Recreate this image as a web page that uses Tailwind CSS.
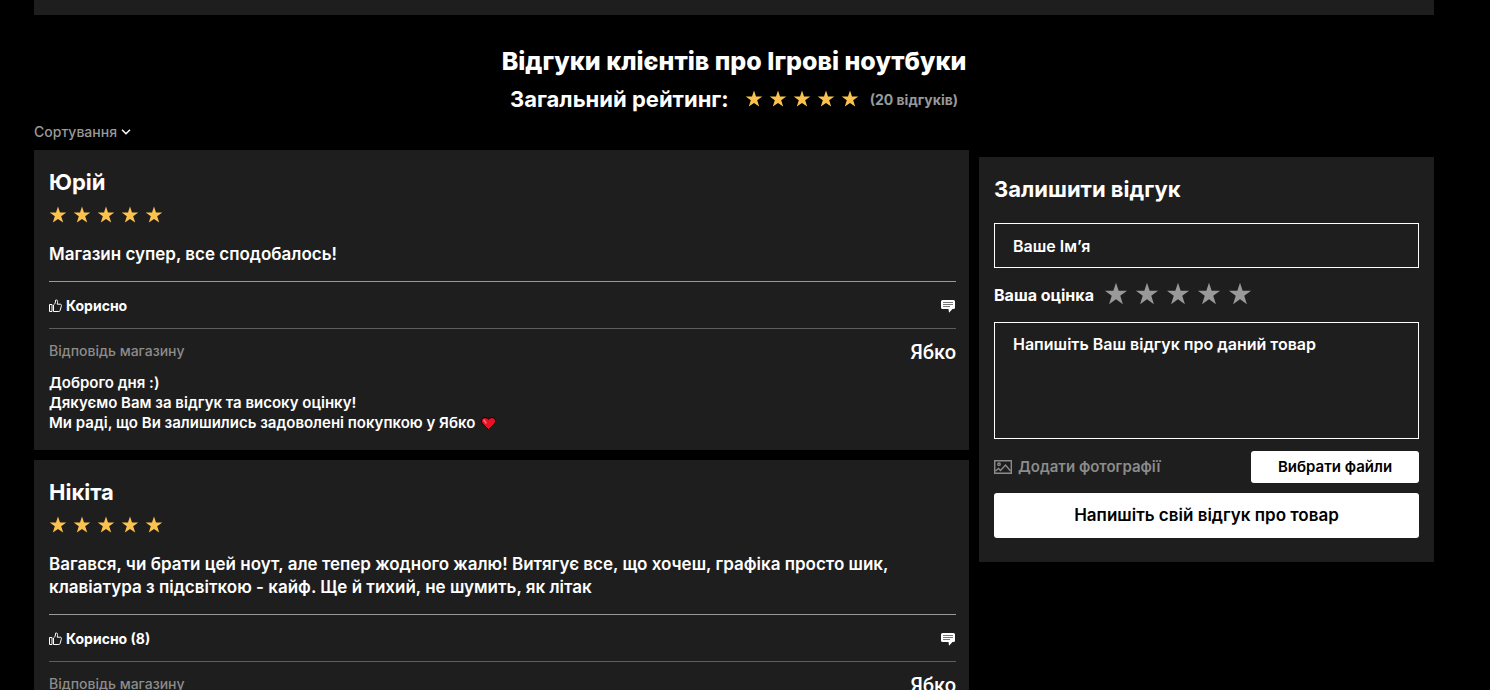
<!DOCTYPE html>
<html lang="uk">
<head>
  <meta charset="UTF-8">
  <title>Відгуки клієнтів про Ігрові ноутбуки</title>
  <script src="https://cdn.jsdelivr.net/npm/@tailwindcss/browser@4"></script>
</head>
<body class="bg-black text-white font-['Inter',sans-serif] pr-[22px]">

  <!-- Іконки -->
  <svg class="hidden">
    <symbol id="star" viewBox="0 0 18 18"><path d="M9 .6l2 5.900h6.300l-5.100 3.800 2 6.300L9 12.900l-5.200 3.700 2-6.300L.7 6.500H7z" fill="currentColor"/></symbol>
    <symbol id="like" viewBox="0 0 13 14"><path d="M.5 5.500h2.500v7H.5zM4.500 6c1.400-.9 2-2 2.100-4.900C8.300.300 9.100 2 8.200 5.200h3.100c1.300 0 1.300 1.200.9 2.400l-1.100 3.900c-.2.700-.6 1-1.300 1H4.500z" fill="none" stroke="currentColor"/></symbol>
    <symbol id="comment" viewBox="0 0 14 13"><path d="M1.500 0h11Q14 0 14 1.500v6Q14 9 12.500 9H11.500L8 12.700 7.500 9h-6Q0 9 0 7.500v-6Q0 0 1.500 0z" fill="#fff"/><path d="M2 2.500h10M2 4.500h10M2 6.500h7" stroke="#777"/></symbol>
  </svg>

  <div class="max-w-[1400px] mx-auto">
    <div class="h-[15px] bg-[#1e1e1e]"></div>

    <header class="pt-[30px] text-center">
      <h1 class="text-[25px] leading-[32px] font-extrabold">Відгуки клієнтів про Ігрові ноутбуки</h1>
      <div class="flex items-center justify-center mt-[7px] h-[30px]">
        <h2 class="text-[22px] leading-[30px] font-bold">Загальний рейтинг:</h2>
        <div class="flex gap-[6px] ml-4 text-[#fcc250]">
          <svg class="size-[18px]"><use href="#star"/></svg>
          <svg class="size-[18px]"><use href="#star"/></svg>
          <svg class="size-[18px]"><use href="#star"/></svg>
          <svg class="size-[18px]"><use href="#star"/></svg>
          <svg class="size-[18px]"><use href="#star"/></svg>
        </div>
        <span class="ml-[11px] text-[14px] font-bold text-[#999]">(20 відгуків)</span>
      </div>
    </header>

    <label class="inline-flex items-center gap-1 h-[36px] align-top">
      <select aria-label="Сортування" class="appearance-none field-sizing-content bg-transparent text-[14px] leading-5 font-medium text-[#999] outline-none">
        <option>Сортування</option>
      </select>
      <svg class="w-[10px] h-[6px]" viewBox="0 0 10 6" fill="none" stroke="#fff" stroke-width="1.500"><path d="M1 .8l4 4 4-4"/></svg>
    </label>

    <main class="flex items-start gap-[10px]">
      <section class="flex-1 flex flex-col gap-[10px]">

        <article class="bg-[#1e1e1e] pt-[17px] pb-[17px] pl-[15px] pr-[13px]">
          <h3 class="text-[22px] leading-[30px] font-bold">Юрій</h3>
          <div class="flex gap-[6px] mt-[9px] text-[#fcc250]">
            <svg class="size-[18px]"><use href="#star"/></svg>
            <svg class="size-[18px]"><use href="#star"/></svg>
            <svg class="size-[18px]"><use href="#star"/></svg>
            <svg class="size-[18px]"><use href="#star"/></svg>
            <svg class="size-[18px]"><use href="#star"/></svg>
          </div>
          <p class="mt-[19px] text-[17px] leading-[23px] font-semibold">Магазин супер, все сподобалось!</p>
          <div class="mt-[15px] h-12 pt-[2px] border-y border-t-[#999] border-b-[#5e5e5e] flex items-center justify-between">
            <button class="flex items-center gap-1 text-[14px] leading-5 font-bold"><svg class="w-[13px] h-[14px]"><use href="#like"/></svg>Корисно</button>
            <button aria-label="Відповісти"><svg class="w-[14px] h-[13px] mr-px"><use href="#comment"/></svg></button>
          </div>
          <div class="h-11 flex items-center justify-between">
            <span class="text-[14px] leading-5 font-medium text-[#8c8c8c]">Відповідь магазину</span>
            <span class="pt-[2px] font-['Roboto',sans-serif] text-[20px] leading-6 font-medium">Ябко</span>
          </div>
          <p class="text-[15px] leading-5 font-semibold">Доброго дня :)<br>Дякуємо Вам за відгук та високу оцінку!<br>Ми раді, що Ви залишились задоволені покупкою у Ябко
            <svg class="inline w-[15px] h-[13px] ml-[2px]" viewBox="0 0 15 13"><path d="M7.500 12.500L1.500 6.800C-.7 3.900 1 .6 4 .6c1.600 0 2.800.7 3.500 1.800C8.200 1.300 9.400.6 11 .6c3 0 4.700 3.300 2.500 6.200z" fill="#e81224" stroke="#000"/><path d="M3 3l2 3" stroke="#f4707a" stroke-width="1.500" stroke-linecap="round"/></svg>
          </p>
        </article>

        <article class="bg-[#1e1e1e] pt-[17px] pb-[17px] pl-[15px] pr-[13px]">
          <h3 class="text-[22px] leading-[30px] font-bold">Нікіта</h3>
          <div class="flex gap-[6px] mt-[9px] text-[#fcc250]">
            <svg class="size-[18px]"><use href="#star"/></svg>
            <svg class="size-[18px]"><use href="#star"/></svg>
            <svg class="size-[18px]"><use href="#star"/></svg>
            <svg class="size-[18px]"><use href="#star"/></svg>
            <svg class="size-[18px]"><use href="#star"/></svg>
          </div>
          <p class="mt-[19px] text-[17px] leading-[23px] font-semibold">Вагався, чи брати цей ноут, але тепер жодного жалю! Витягує все, що хочеш, графіка просто шик,<br>клавіатура з підсвіткою - кайф. Ще й тихий, не шумить, як літак</p>
          <div class="mt-[15px] h-12 pt-[2px] border-y border-t-[#999] border-b-[#5e5e5e] flex items-center justify-between">
            <button class="flex items-center gap-1 text-[14px] leading-5 font-bold"><svg class="w-[13px] h-[14px]"><use href="#like"/></svg>Корисно (8)</button>
            <button aria-label="Відповісти"><svg class="w-[14px] h-[13px] mr-px"><use href="#comment"/></svg></button>
          </div>
          <div class="h-11 flex items-center justify-between">
            <span class="text-[14px] leading-5 font-medium text-[#8c8c8c]">Відповідь магазину</span>
            <span class="pt-[2px] font-['Roboto',sans-serif] text-[20px] leading-6 font-medium">Ябко</span>
          </div>
        </article>
      </section>

      <!-- Форма відгуку -->
      <form class="w-[455px] mt-[7px] bg-[#1e1e1e] px-[15px] pt-[17px] pb-6">
        <h3 class="text-[22px] leading-[30px] font-bold">Залишити відгук</h3>
        <input type="text" aria-label="Ваше Ім’я" placeholder="Ваше Ім’я" class="block w-full h-[45px] mt-[19px] px-[18px] border border-white bg-transparent text-[16px] font-semibold placeholder:text-white outline-none">
        <fieldset class="flex items-center h-[54px]">
          <legend class="float-left mr-[10px] text-[16px] font-bold">Ваша оцінка</legend>
          <div class="flex gap-[7px] pb-[2px] text-[#999]">
            <label><input type="radio" name="rating" value="1" aria-label="1" class="sr-only"><svg class="size-6"><use href="#star"/></svg></label>
            <label><input type="radio" name="rating" value="2" aria-label="2" class="sr-only"><svg class="size-6"><use href="#star"/></svg></label>
            <label><input type="radio" name="rating" value="3" aria-label="3" class="sr-only"><svg class="size-6"><use href="#star"/></svg></label>
            <label><input type="radio" name="rating" value="4" aria-label="4" class="sr-only"><svg class="size-6"><use href="#star"/></svg></label>
            <label><input type="radio" name="rating" value="5" aria-label="5" class="sr-only"><svg class="size-6"><use href="#star"/></svg></label>
          </div>
        </fieldset>
        <textarea aria-label="Ваш відгук" placeholder="Напишіть Ваш відгук про даний товар" class="block w-full h-[117px] px-[18px] py-[10px] border border-white bg-transparent text-[16px] leading-[22px] font-semibold placeholder:text-white outline-none resize-none"></textarea>
        <div class="flex items-center justify-between mt-3">
          <label for="files" class="flex items-center gap-[6px] text-[15px] font-semibold text-[#8c8c8c]">
            <svg class="w-[18px] h-[14px]" viewBox="0 0 18 14" fill="none" stroke="currentColor" stroke-width="1.400"><path d="M.7.700h16.600v12.600H.7z"/><circle cx="5" cy="4.200" r="1.200"/><path d="M1.500 11l3-2.500 2 2 5-5.500 5 6"/></svg>
            Додати фотографії
          </label>
          <button type="button" id="files" class="w-[168px] h-8 rounded-[3px] bg-white text-black text-[15px] font-semibold">Вибрати файли</button>
        </div>
        <button type="submit" class="block w-full h-[45px] mt-[10px] rounded-[3px] bg-white text-black text-[17px] font-semibold">Напишіть свій відгук про товар</button>
      </form>
    </main>
  </div>

</body>
</html>
